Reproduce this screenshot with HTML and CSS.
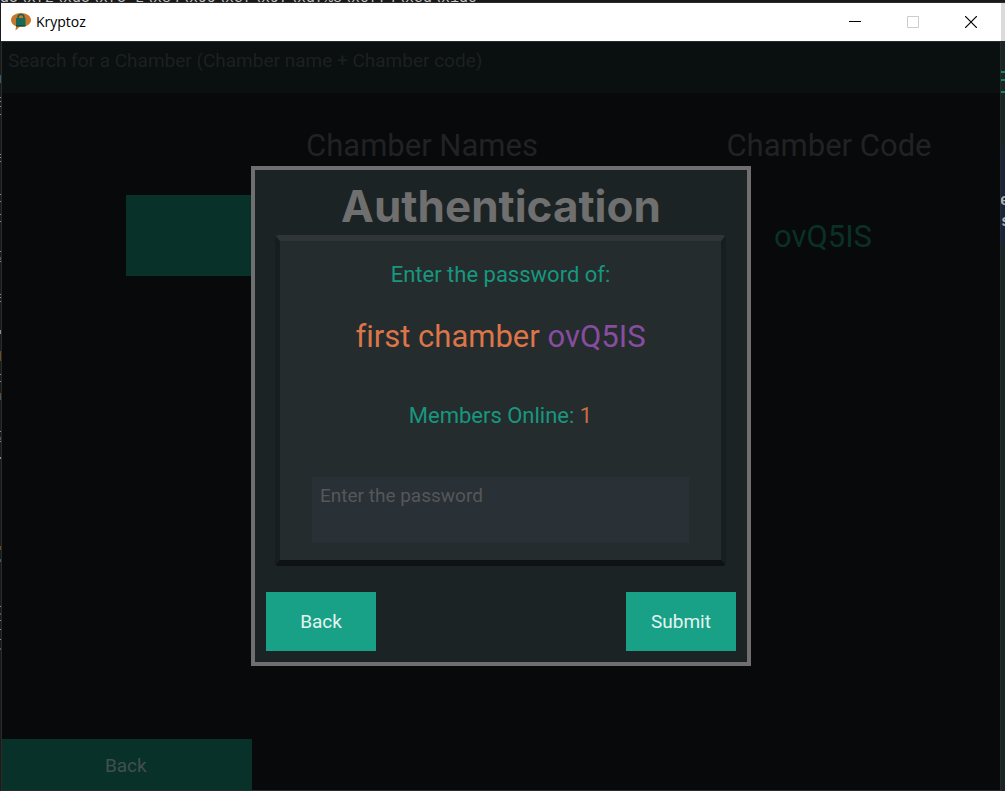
FILE: index.html
```html
<!DOCTYPE html>
<html lang="en">
<head>
<meta charset="utf-8">
<title>Kryptoz</title>
<link rel="stylesheet" href="styles.css">
</head>
<body>
<div class="desktop">
  <div class="code-strip"><span>d5\xf2\xd5\xf5~L\x84\x99\xef\x97\xdf%8\x0ff4\xed\x1d0</span></div>
  <div class="edge-left">
    <svg width="1" height="788" aria-hidden="true">
      <path stroke="#8a8d91" d="M0 103.500h1M0 94.500h1M0 98.500h1M0 111.500h1M0 151.500h1M0 154.500h1M0 158.500h1M0 191.500h1M0 198.500h1M0 211.500h1M0 218.500h1M0 248.500h1M0 258.500h1M0 291.500h1M0 294.500h1M0 298.500h1M0 371.500h1M0 378.500h1M0 428.500h1M0 438.500h1M0 603.500h1M0 617.500h1M0 626.500h1M0 636.500h1"/>
      <path fill="#8a8d91" d="M0 327h1v4H0zM0 454h1v2H0z"/>
      <path fill="#6b4a1c" d="M0 348h1v10H0zM0 390h1v4H0zM0 543h1v4H0z"/>
      <path fill="#3b5a75" d="M0 72h1v8H0zM0 254h1v3H0zM0 394h1v3H0zM0 434h1v3H0zM0 556h1v3H0zM0 610h1v2H0zM0 645h1v2H0z"/>
    </svg>
  </div>
  <main class="window">
    <header class="titlebar">
      <svg class="logo" viewBox="0 0 20 18" width="20" height="18" aria-hidden="true">
        <path fill="#c9772c" d="M10 0C4.500 0 0 3 0 7c0 3 2 5 5 6.200L4.500 17.500 8.500 14H10c5.500 0 10-3 10-7S15.500 0 10 0z"/>
        <path fill="none" stroke="#17604c" stroke-width="1.500" d="M7 6V4.500a3 3 0 0 1 6 0V6"/>
        <path fill="#176b56" d="M5 5h9.500v8H5z"/>
        <path fill="#104a40" d="M5 12h9.500v1.500H5z"/>
      </svg>
      <h1 class="app-name">Kryptoz</h1>
      <div class="window-controls">
        <button class="control" aria-label="Minimize"><svg width="12" height="12"><path stroke="#000" d="M0 5.500h12"/></svg></button>
        <button class="control" aria-label="Maximize" disabled><svg width="12" height="12"><path fill="none" stroke="#ccc" d="M.5.5h11v11H.5z"/></svg></button>
        <button class="control" aria-label="Close"><svg width="12" height="12"><path stroke="#000" stroke-width="1.200" d="M0 0l12 12M12 0L0 12"/></svg></button>
      </div>
    </header>
    <div class="app">
      <input class="search" type="text" aria-label="Search for a Chamber" placeholder="Search for a Chamber (Chamber name + Chamber code)">
      <section class="chambers">
        <h2 class="heading">Chamber Names</h2>
        <h2 class="heading">Chamber Code</h2>
        <button class="chamber" aria-label="first chamber"></button>
        <p class="code">ovQ5IS</p>
      </section>
      <button class="page-back">Back</button>
      <div class="overlay">
        <form class="dialog" role="dialog" aria-labelledby="dialog-title">
          <h2 class="dialog-title" id="dialog-title">Authentication</h2>
          <div class="panel">
            <label class="prompt" for="password">Enter the password of:</label>
            <p class="target">first chamber <span class="target-code">ovQ5IS</span></p>
            <p class="members">Members Online: <span class="count">1</span></p>
            <input class="password" id="password" type="password" placeholder="Enter the password">
          </div>
          <div class="actions">
            <button class="action" type="button">Back</button>
            <button class="action" type="submit">Submit</button>
          </div>
        </form>
      </div>
    </div>
  </main>
  <div class="edge-right">
    <svg width="4" height="788" aria-hidden="true">
      <path fill="#dadada" d="M0 0h4v38H0z"/>
      <path fill="#1c2526" d="M0 38h4v750H0z"/>
      <path fill="#17243a" d="M0 143h4v98H0z"/>
      <path stroke="#10896c" stroke-width="2" d="M0 69h4M0 77h4M0 89h4"/>
      <text x="-1" y="202">e</text>
      <text x="0" y="223">s</text>
    </svg>
  </div>
</div>
</body>
</html>
```
FILE: styles.css
```css
* { box-sizing: border-box; }
body { margin: 0; font-family: Roboto, "Liberation Sans", sans-serif; font-variant-ligatures: none; background: #1d1d1d; }
h1, h2, p { margin: 0; font-weight: 400; }
button { border: 0; padding: 0; font: inherit; }
input { border: 0; font: inherit; outline: 0; }
svg { display: block; }

.desktop {
  display: grid;
  grid-template-columns: 1px 1fr 4px;
  grid-template-rows: 3px 1fr;
  height: 100vh;
  overflow: hidden;
}
.code-strip {
  grid-column: 1 / -1;
  display: flex;
  align-items: flex-end;
  height: 3px;
  overflow: hidden;
  border-bottom: 1px solid #2b2b2b;
  background: #191919;
  color: #c4c4c4;
  font: 15px/6px "Liberation Mono", monospace;
  white-space: pre;
}
.edge-left, .edge-right { overflow: hidden; }
.edge-left { background: #1b1b1b; }
.edge-right text { font: 700 16px "Liberation Mono", monospace; fill: #a9b0b5; }

.window { display: flex; flex-direction: column; min-width: 0; }
.titlebar { display: flex; align-items: center; height: 38px; padding: 0 1px 0 10px; background: #fff; }
.app-name { margin-left: 5px; font: 14px/20px "Open Sans", sans-serif; color: #000; }
.window-controls { display: flex; margin-left: auto; }
.control { display: grid; place-items: center; width: 58px; height: 38px; background: none; }

.app {
  position: relative;
  flex: 1;
  display: flex;
  flex-direction: column;
  border: 1px solid #2a2b2b;
  background: #08090b;
}
.search { height: 51px; padding: 0 7px 14px 6px; background: #0a0f10; font-size: 19px; }
.search::placeholder { color: #1d2021; opacity: 1; }

.chambers {
  display: grid;
  grid-template-columns: 592fr 222fr;
  row-gap: 28px;
  padding: 32px 60px 0 124px;
}
.heading { font-size: 31px; line-height: 42px; text-align: center; color: #212223; white-space: nowrap; }
.chamber { height: 81px; background: #08312a; }
.code { padding-right: 12px; font-size: 31px; line-height: 83px; text-align: center; color: #0a3028; }
.page-back {
  width: 25%;
  height: 51px;
  margin-top: auto;
  padding: 2px 2px 0 0;
  background: #08312a;
  color: #444f4d;
  font-size: 19px;
}

.overlay { position: absolute; inset: 0; display: grid; place-items: center; }
.dialog {
  display: flex;
  flex-direction: column;
  width: 500px;
  border: 4px solid #6f6f6f;
  padding: 10px 11px 11px;
  background: #1c2324;
}
.dialog-title { font: 700 44px/52px Inter, sans-serif; text-align: center; color: #6f6f6f; }
.panel {
  display: flex;
  flex-direction: column;
  align-items: center;
  margin: 3px 10px 26px 9px;
  border: 5px solid #181d1f;
  border-top: 6px solid #303638;
  border-bottom: 6px solid #0f1214;
  border-radius: 4px;
  padding: 19px 32px 17px;
  background: #242c2e;
}
.prompt { font-size: 22px; line-height: 30px; color: #18977e; }
.target { margin-top: 27px; font-size: 31px; line-height: 40px; color: #dd7549; }
.target-code { color: #884da0; }
.members { margin-top: 44px; font-size: 22px; line-height: 30px; color: #18977e; }
.count { color: #c86c48; }
.password { width: 100%; height: 66px; margin-top: 46px; padding: 0 8px 29px; background: #293036; color: #ccc; font-size: 19px; }
.password::placeholder { color: #565759; opacity: 1; }
.actions { display: flex; justify-content: space-between; }
.action { width: 110px; height: 59px; background: #18a186; color: #e3f4f0; font-size: 19px; }
```
